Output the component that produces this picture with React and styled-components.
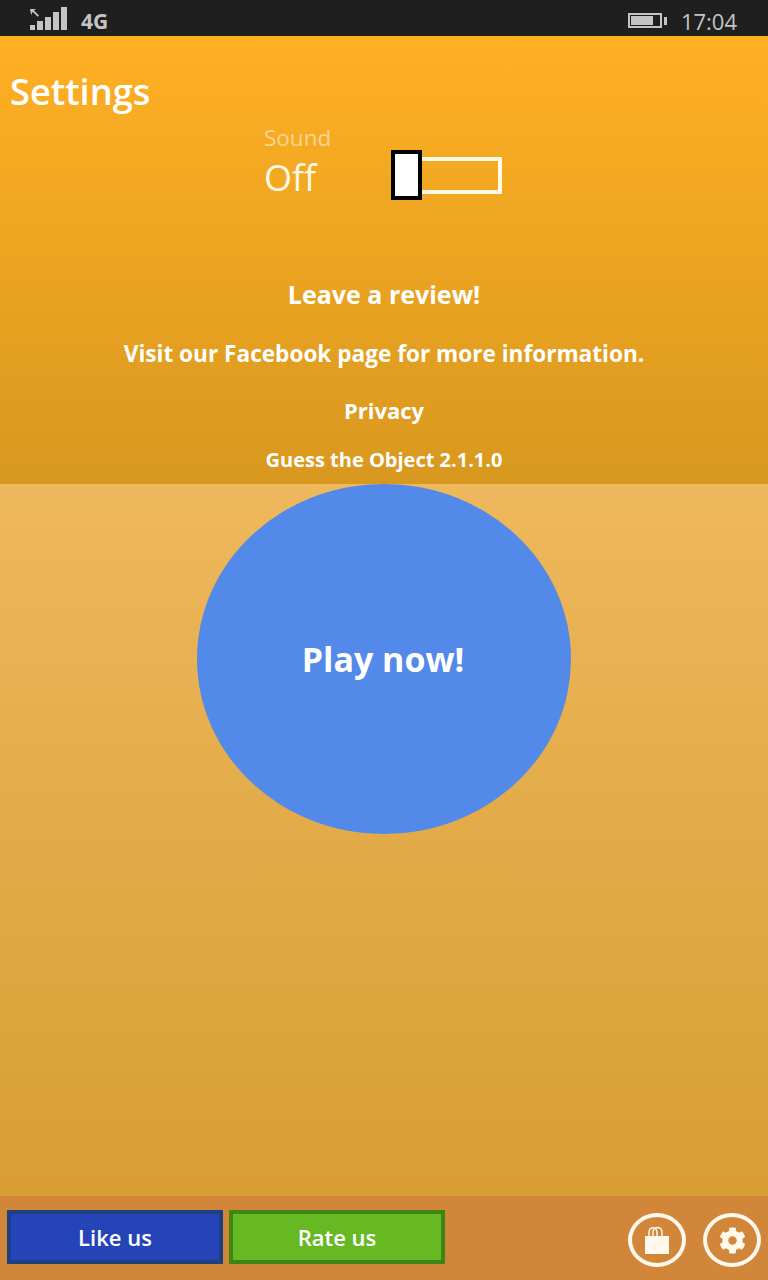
import styled, { createGlobalStyle } from 'styled-components'
import { FaCog } from 'react-icons/fa'

const Global = createGlobalStyle`
  html, body { margin: 0; padding: 0; }
  body { font-family: "Open Sans", "Noto Sans", sans-serif; }
`

const Screen = styled.div`
  width: 768px;
  height: 1280px;
  display: flex;
  flex-direction: column;
  overflow: hidden;
  color: #fff;
`

const StatusBar = styled.div`
  height: 36px;
  flex: none;
  background: #1f1f1f;
  color: #c4c4c4;
  display: flex;
  align-items: center;
  justify-content: space-between;
  padding: 0 31px 0 29px;
`

const StatusGroup = styled.div`
  display: flex;
  align-items: center;
  gap: ${p => p.$gap}px;
`

const Network = styled.span`
  font-size: 21px;
  font-weight: 700;
  line-height: 1;
  margin-top: 7px;
`

const Clock = styled.span`
  font-size: 22px;
  line-height: 1;
  margin-top: 5px;
`

const SignalIcon = styled.svg`
  margin-top: 1px;
`

const BatteryIcon = styled.svg`
  margin-top: 5px;
`

const SettingsPanel = styled.section`
  height: 448px;
  flex: none;
  background: linear-gradient(#ffb023, #d8981f);
  padding-top: 34px;
  box-sizing: border-box;
  display: flex;
  flex-direction: column;
`

const Title = styled.h1`
  margin: 0 0 0 10px;
  font-size: 36.3px;
  font-weight: 600;
  line-height: 42px;
`

const SoundRow = styled.div`
  margin: 9px 0 0 264px;
  display: flex;
  align-items: flex-end;
  gap: 60px;
`

const SoundText = styled.div`
  display: flex;
  flex-direction: column;
`

const SoundLabel = styled.span`
  font-size: 22.5px;
  line-height: 33px;
  color: #fbd596;
`

const SoundValue = styled.span`
  font-size: 36px;
  line-height: 48px;
  color: #fff9e8;
`

const Toggle = styled.div`
  position: relative;
  width: 111px;
  height: 37px;
  margin-bottom: 8px;
  box-sizing: border-box;
  border: 4px solid #fff9e8;
`

const Thumb = styled.span`
  position: absolute;
  left: -4px;
  top: -11px;
  width: 31px;
  height: 50px;
  box-sizing: border-box;
  background: #fff;
  border: 4px solid #000;
`

const Links = styled.nav`
  margin-top: 77px;
  display: flex;
  flex-direction: column;
  align-items: center;
  font-weight: 700;
`

const LinkLine = styled.a`
  font-size: ${p => p.$size}px;
  line-height: 30px;
  margin-bottom: ${p => p.$after}px;
`

const Main = styled.main`
  flex: 1;
  background: linear-gradient(#eeb85c, #d69e33);
  display: flex;
  justify-content: center;
  align-items: flex-start;
`

const PlayButton = styled.button`
  width: 374px;
  height: 350px;
  border: 0;
  padding: 0 2px 0 0;
  border-radius: 50%;
  background: #5389e8;
  color: #fff;
  font-family: inherit;
  font-size: 34px;
  font-weight: 700;
`

const BottomBar = styled.footer`
  height: 84px;
  flex: none;
  background: #d2863a;
  display: flex;
  align-items: center;
  gap: 6px;
  padding: 0 7px 3px;
  box-sizing: border-box;
`

const WideButton = styled.button`
  width: 216px;
  height: 54px;
  box-sizing: border-box;
  border: 4px solid ${p => p.$edge};
  background: ${p => p.$fill};
  color: #fff;
  font-family: inherit;
  font-size: 22px;
  font-weight: 600;
`

const RoundActions = styled.div`
  margin-left: auto;
  margin-top: 7px;
  display: flex;
  gap: 17px;
`

const RoundButton = styled.button`
  width: 58px;
  height: 54px;
  box-sizing: border-box;
  border: 4px solid #fff8ec;
  border-radius: 50%;
  background: none;
  color: #fff8ec;
  padding: 0;
  display: flex;
  align-items: center;
  justify-content: center;
`

const Signal = () => (
  <SignalIcon width="38" height="24" viewBox="0 0 38 24" fill="#c4c4c4">
    <path d="M1 2l6 0-2 1.500 5 5-1.300 1.300-5-5L2.200 8z" />
    <rect x="1" y="18" width="5" height="5" />
    <rect x="8" y="14" width="6" height="9" />
    <rect x="16" y="10" width="6" height="13" />
    <rect x="24" y="5" width="6" height="18" />
    <rect x="32" y="0" width="6" height="23" />
  </SignalIcon>
)

const Battery = () => (
  <BatteryIcon width="40" height="16" viewBox="0 0 40 16">
    <rect x="1" y="1" width="32" height="13" fill="none" stroke="#c4c4c4" strokeWidth="2" />
    <rect x="3" y="3" width="22" height="9" fill="#c4c4c4" />
    <rect x="36" y="4" width="3" height="8" fill="#c4c4c4" />
  </BatteryIcon>
)

const Bag = () => (
  <svg width="24" height="28" viewBox="0 0 24 28">
    <rect x="0" y="10" width="24" height="18" fill="#fff8ec" />
    <path d="M4 10V7c0-7 8-7 8 0v3M8 10V6c0-6 9-6 9 0v4" fill="none" stroke="#fff8ec" strokeWidth="1.500" />
  </svg>
)

export default function App() {
  return (
    <Screen>
      <Global />
      <StatusBar>
        <StatusGroup $gap={14}>
          <Signal />
          <Network>4G</Network>
        </StatusGroup>
        <StatusGroup $gap={13}>
          <Battery />
          <Clock>17:04</Clock>
        </StatusGroup>
      </StatusBar>
      <SettingsPanel>
        <Title>Settings</Title>
        <SoundRow>
          <SoundText>
            <SoundLabel>Sound</SoundLabel>
            <SoundValue>Off</SoundValue>
          </SoundText>
          <Toggle>
            <Thumb />
          </Toggle>
        </SoundRow>
        <Links>
          <LinkLine $size={25} $after={30}>Leave a review!</LinkLine>
          <LinkLine $size={22.6} $after={26}>Visit our Facebook page for more information.</LinkLine>
          <LinkLine $size={22} $after={20}>Privacy</LinkLine>
          <LinkLine $size={20} $after={0}>Guess the Object 2.1.1.0</LinkLine>
        </Links>
      </SettingsPanel>
      <Main>
        <PlayButton>Play now!</PlayButton>
      </Main>
      <BottomBar>
        <WideButton $fill="#2444b8" $edge="#1e4083">Like us</WideButton>
        <WideButton $fill="#67b924" $edge="#3e8516">Rate us</WideButton>
        <RoundActions>
          <RoundButton aria-label="Store"><Bag /></RoundButton>
          <RoundButton aria-label="Settings"><FaCog size={27} /></RoundButton>
        </RoundActions>
      </BottomBar>
    </Screen>
  )
}
